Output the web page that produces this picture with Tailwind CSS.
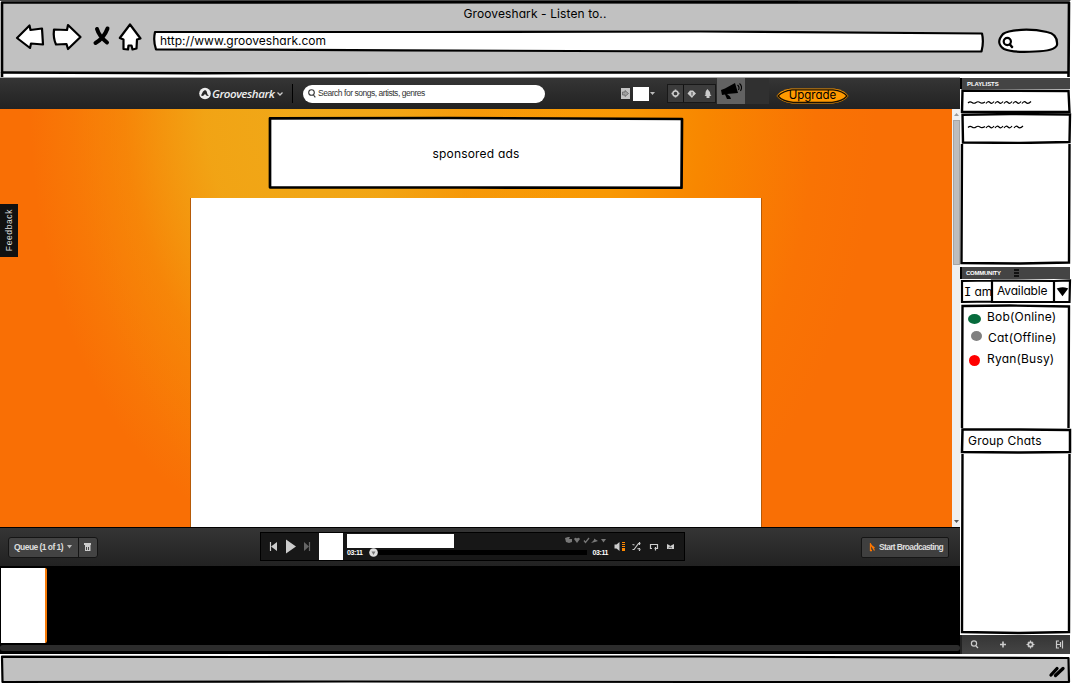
<!DOCTYPE html>
<html lang="en">
<head>
<meta charset="utf-8">
<title>Grooveshark - Listen to..</title>
<script src="https://cdn.jsdelivr.net/npm/@tailwindcss/browser@4"></script>
</head>
<body class="w-[1072px] h-[684px] overflow-hidden bg-white font-['Inter',sans-serif] text-black">
<div class="flex h-[684px] w-[1072px] flex-col [font-feature-settings:'cv11']">

  <!-- Browser chrome -->
  <header class="relative h-[77px] shrink-0">
    <svg class="absolute inset-0" width="1072" height="77" fill="none" stroke="#000" stroke-linejoin="round" stroke-linecap="round">
      <path d="M2 2.5L1069 2L1068.500 73L2 72.500Z" fill="#c1c1c1" stroke="none"/>
      <path d="M0 .5H1070" stroke="#444" stroke-width="1"/>
      <path d="M2 77L2 2.500L500 2.200L1069 2.500L1068.500 77" stroke-width="2.600"/>
      <path d="M2 72.500L200 73.200L560 72.500L1068 72.500" stroke-width="2.400"/>
      <path d="M155 32L420 32L700 31.500L982 33.500Q984 42 981.500 51.500L700 51.500L400 50.300L156 49.300Q153 41 155 32Z" fill="#fff" stroke-width="2.200"/>
      <path d="M17 38L29.500 25.500L30.500 30L42 28.500L43 44.500L31 43.500L30 48Z" fill="#fff" stroke-width="2.200"/>
      <path d="M54 29.500L67 30L68 25L80.500 37L68 49L66.500 44L56 44.500Q53 38 54 29.500Z" fill="#fff" stroke-width="2.200"/>
      <path d="M97 29Q99 36 107 42.500M107.500 28.500Q104 38 95.500 43" stroke-width="4"/>
      <path d="M130 24.500L119.800 38L123.500 39.500L123.500 49L128 49.500L128.500 45.500L131.500 45.500L132.500 49.500L136.500 48.500L137 39.500L140.500 38.500Z" fill="#fff" stroke-width="2.200"/>
      <path d="M1009 31.500Q1027 27.500 1047 32Q1058 34 1057 45Q1055 51 1035 51.500Q1014 53 1004 49Q995 43 1003 34Q1005 32.500 1009 31.500Z" fill="#fff" stroke-width="2.200"/>
      <circle cx="1007.300" cy="41.500" r="3.600" stroke-width="2.200"/><path d="M1010 44.500L1012 47" stroke-width="2.400"/>
    </svg>
    <div class="relative flex flex-col">
      <div class="pt-[5px] pr-[2px] text-center text-[12px] leading-[17px] tracking-[.1px]">Grooveshark - Listen to..</div>
      <div class="pl-[160px] pt-[10px] text-[12px] leading-[17px] tracking-[.02px]">http://www.grooveshark.com</div>
    </div>
  </header>

  <div class="flex h-[577px] shrink-0">
    <main class="flex w-[960px] flex-col border-t border-[#aaa]">

      <!-- Top navigation -->
      <nav class="flex h-[31px] shrink-0 items-center bg-linear-to-b from-[#353535] to-[#222] text-[#eee]">
        <svg class="ml-[199px] mr-px" width="12" height="13" viewBox="0 0 12 13"><circle cx="6" cy="6.500" r="5.800" fill="#eee"/><path d="M2 8.500L4 4.500L6 3L7.500 4L8.500 7.500L10 8.500L8 9L6 7L4 9Z" fill="#292929"/></svg>
        <span class="w-[64px] whitespace-nowrap font-['Open_Sans',sans-serif] text-[11.500px] font-semibold italic leading-[16px] tracking-[-.4px]">Grooveshark</span>
        <svg width="8" height="8" viewBox="0 0 8 8" fill="none" stroke="#ccc" stroke-width="1.300"><path d="M1.500 2.500L4 5L6.500 2.500"/></svg>
        <div class="ml-[8px] mr-[10px] h-[19px] w-px bg-black"></div>
        <div class="flex h-[18px] w-[242px] items-center rounded-full bg-white pl-[5px] text-[#333]">
          <svg width="8" height="9" viewBox="0 0 8 9" fill="none" stroke="#333" stroke-width="1.100"><circle cx="3.500" cy="3.500" r="2.800"/><path d="M5.500 6L7.300 8.300"/></svg>
          <span class="ml-[2px] whitespace-nowrap font-['Liberation_Sans',sans-serif] text-[8.500px] tracking-[-.47px]">Search for songs, artists, genres</span>
        </div>
        <svg class="ml-[76px]" width="10" height="11"><path d="M0 0H9V11H0Z" fill="#c4c4c4"/><path d="M1.500 4H4V2.500L7.500 5.500L4 8.500V7H1.500Z" fill="#a0a0a0" stroke="#666" stroke-width=".8"/></svg>
        <div class="ml-[2px] h-[14px] w-[16px] bg-white"></div>
        <svg class="ml-[1px]" width="5" height="4"><path d="M0 0H5L2.500 3Z" fill="#bbb"/></svg>
        <div class="ml-[12px] flex h-[19px] w-[49px] border border-[#181818] bg-[#3c3c3c]">
          <svg width="47" height="17" viewBox="0 0 47 17"><path d="M15.500 0V17" stroke="#111"/><circle cx="7.500" cy="8.500" r="2.600" fill="none" stroke="#ccc" stroke-width="1.500"/><path d="M7.500 4.500V6M7.500 11V12.500M3.500 8.500H5M10 8.500H11.500" stroke="#ccc" stroke-width="1.600"/><path d="M19.500 8.500L22 5.500H25L28 8.500L25 11.500L24 13L22 11Z" fill="#ccc"/><path d="M24 7V10.500" stroke="#444"/><path d="M39.500 4Q42 6 42.500 10L43.500 11H36.500L37.500 10Q37 6 39.500 4ZM38.500 11H41.500V13H38.500Z" fill="#ccc"/></svg>
        </div>
        <div class="ml-px mt-[-6px] flex h-[26px] w-[52px] bg-[#303030]">
          <svg width="28" height="26" viewBox="0 0 28 26"><path d="M0 0H28V26H0Z" fill="#626262"/><path d="M4 12L8 10.500L18 5L21 15L10 16L13 18.500L14 21H10L8 16.500L5 17Z" fill="#000"/><path d="M20.500 7Q23 9 21.500 12M22.500 5.500Q26 8.500 23.500 13" fill="none" stroke="#000" stroke-width="1.100"/></svg>
        </div>
        <div class="relative ml-[7px] mt-[5px] h-[16px] w-[73px] text-center text-[11.500px] leading-[15px] tracking-[0px] text-black">
          <svg class="absolute inset-0" width="73" height="16"><path d="M15 .5H58Q69 2 72.500 8Q68 14 57 15.500H16Q5 14 .5 8Q4 2 15 .5Z" fill="#ff9900"/><path d="M16 1.800H57Q67 3 71 8Q67 13 56 14.300H17Q6 13 2 8Q7 3 16 1.800Z" fill="none" stroke="#1a1000" stroke-width="1.300"/></svg>
          <span class="relative">Upgrade</span>
        </div>
      </nav>

      <!-- Page content -->
      <section class="flex h-[418px] shrink-0 bg-[#f96f05] bg-[radial-gradient(ellipse_270px_430px_at_300px_0px,#f0a818_0%,#f1a616ee_35%,#f4960c88_65%,#f96f0500_100%),radial-gradient(ellipse_400px_520px_at_476px_0px,#f99c06_0%,#f89804_37%,#f88700_57%,#f97304_85%,#f96f05_100%)]">
        <div class="h-[53px] w-[18px] mt-[95px] flex shrink-0 items-center justify-center bg-[#111] text-[#ddd]">
          <span class="rotate-180 font-['Liberation_Sans',sans-serif] text-[8.500px] leading-none tracking-[.6px] [writing-mode:vertical-rl]">Feedback</span>
        </div>
        <div class="ml-[172px] flex w-[572px] flex-col items-center">
          <div class="relative mt-[7px] flex h-[73px] w-[416px] shrink-0 items-center justify-center pt-[2px] text-[12px] tracking-[.18px]">
            <svg class="absolute inset-0" width="416" height="73"><path d="M2 2.300L180 2L414 3L413.500 71.800L200 71.500L2 71.300Z" fill="#fff" stroke="#000" stroke-width="2.700" stroke-linejoin="round"/></svg>
            <span class="relative">sponsored ads</span>
          </div>
          <div class="mt-[9px] w-full flex-1 border-x border-[#b55a08] bg-white"></div>
        </div>
        <div class="ml-auto flex w-[8px] flex-col items-center justify-between bg-[#efefef]">
          <div class="flex h-[156px] w-full flex-col items-center"><svg width="8" height="11"><path d="M2 7H7L4.500 4Z" fill="#999"/></svg><div class="ml-px w-[7px] flex-1 border border-[#a5a5a5] bg-[#bdbdbd]"></div></div>
          <svg width="8" height="10"><path d="M2 3H7L4.500 6Z" fill="#555"/></svg>
        </div>
      </section>

      <!-- Player -->
      <section class="flex h-[39px] shrink-0 items-center border-t border-black bg-linear-to-b from-[#353535] to-[#222] font-['Liberation_Sans',sans-serif] text-[#ddd]">
        <div class="ml-[8px] flex h-[21px] w-[90px] rounded-[3px] border border-[#151515] bg-[#434343]">
          <div class="flex w-[70px] items-center border-r border-[#151515] pl-[5px]"><span class="w-[50px] whitespace-nowrap text-[8.500px] font-bold tracking-[-.55px]">Queue (1 of 1)</span><svg class="ml-[3px]" width="5" height="4"><path d="M0 0H5L2.500 3.500Z" fill="#bbb"/></svg></div>
          <svg class="ml-[5px] mt-[5px]" width="8" height="9"><path d="M0 0H7V2H0ZM1 2H6.500V8H1Z" fill="#ccc"/><path d="M2.500 4V7M4.500 4V7" stroke="#444"/></svg>
        </div>
        <div class="-mt-px ml-[162px] flex h-[29px] w-[425px] border border-black bg-[#171717]">
          <svg width="58" height="27" viewBox="0 0 58 27"><path d="M9.500 9V18" stroke="#ccc" stroke-width="1.200"/><path d="M16 9V18L10 13.500ZM25 6.500V20.500L35 13.500Z" fill="#ccc"/><path d="M43 9V18L48 13.500Z" fill="#666"/><path d="M48.500 9V18" stroke="#666" stroke-width="1.200"/></svg>
          <div class="h-[27px] w-[24px] bg-white"></div>
          <div class="ml-[4px] flex w-[261px] flex-col">
            <div class="flex h-[15px] justify-between">
              <div class="mt-px h-[14px] w-[107px] bg-white"></div>
              <svg width="44" height="12" viewBox="0 0 44 12"><g fill="#777"><path d="M1 5L4 4H6L5 6L8 6V9L5 10L2 9Z"/><path d="M10 6Q11.500 4 13 5.500Q14.500 4 16 6L13 10Z"/><path d="M27 10L30 7V5.500L34 8L31 9Z"/><path d="M37 6H42L39.500 9.500Z"/></g><path d="M20 7.500L21.500 9.500L25 5" fill="none" stroke="#777" stroke-width="1.300"/></svg>
            </div>
            <div class="flex items-center text-[7px] font-bold leading-[9px] text-white">
              <span class="w-[16px] tracking-[-.4px]">03:11</span>
              <svg class="ml-[6px]" width="9" height="9"><circle cx="4.500" cy="4.500" r="4.300" fill="#ddd"/><path d="M2.500 3.500H6.500L4.500 7Z" fill="#777"/></svg>
              <div class="h-[5px] w-[209px] bg-black"></div>
              <span class="ml-auto tracking-[-.4px]">03:11</span>
            </div>
          </div>
          <svg class="ml-[6px]" width="66" height="27" viewBox="0 0 66 27"><path d="M.5 11.500H2.500L5.500 9V18L2.500 15.500H.5Z" fill="#ccc"/><path d="M8 9H11V10H8ZM8 11H11V12H8ZM8 13H11V14H8ZM8 15H11V18H8Z" fill="#f80"/><path d="M18.500 16.500H20L24.500 10.500H26.500M18.500 11.500L20.500 12M23.500 15.500L26.500 16.500M25.500 9V12M25.500 15V18" fill="none" stroke="#ccc" stroke-width="1.200"/><path d="M38 15.500H36.500V11.500H43.500V15.500H40.500M41.500 14V17.500" fill="none" stroke="#ccc" stroke-width="1.200"/><path d="M53 11L55 12L56.500 13L58 12L60 11V16H53Z" fill="#ccc"/><path d="M54.500 15L56 14L58 15" stroke="#555" fill="none"/></svg>
        </div>
        <div class="ml-auto mr-[11px] flex h-[21px] w-[88px] items-center rounded-[2px] border border-[#151515] bg-[#3f3f3f] pl-[7px]">
          <svg width="7" height="9"><path d="M1.500 8V1L5.500 7.500M1 7.500H3M3 3L5.500 5" fill="none" stroke="#f70" stroke-width="1.300"/></svg>
          <span class="ml-[3px] whitespace-nowrap text-[8.500px] font-bold tracking-[-.67px]">Start Broadcasting</span>
        </div>
      </section>
      <section class="flex flex-1 flex-col bg-black">
        <div class="ml-px mt-[2px] h-[75px] w-[46px] rounded-r-[2px] border-r-2 border-[#f87b08] bg-white"></div>
        <div class="mt-[2px] h-[6px] rounded bg-[#2c2c2c]"></div>
      </section>
    </main>

    <!-- Sidebar -->
    <aside class="flex w-[112px] flex-col text-[12px]">
      <div class="mr-[2px] mt-px flex h-[11px] shrink-0 items-center border-l-2 border-black bg-[#444] pl-[5px] pt-px font-['Liberation_Sans',sans-serif] text-[6px] font-bold leading-none tracking-[-.1px] text-white">PLAYLISTS</div>
      <div class="relative h-[24px] shrink-0">
        <svg class="absolute inset-0" width="112" height="24" fill="#fff" stroke="#000"><path d="M2.500 1.500L108.500 2L109.500 23H2Z" stroke-width="2.400"/><path d="M8 14q2-2 4-.5t4 0t4 0t5-.5M26 14.500q2-3 4-1t4-1M35 14.500q2-3 4-1t4-1M44 14.500q2-3 4-1t4-1M53 14.500q2-3 4-1t4-1M62 14.500q2-3 4-1t5-1" fill="none" stroke-width="1.200"/></svg>
      </div>
      <div class="relative h-[31px] shrink-0">
        <svg class="absolute inset-0" width="112" height="31" fill="#fff" stroke="#000"><path d="M2.500 1.800L50 1L110 1.500L109.500 29L60 30L3 29.500Z" stroke-width="2.400"/><path d="M8 14.500q2-2 4-.5t4 0t4 0t5-.5M26 15q2-3 4-1t4-1M35 15q2-3 4-1t4-1M44 15q2-3 4-1t4-1M54 15q2-3 4-1t5-1" fill="none" stroke-width="1.200"/></svg>
      </div>
      <svg class="shrink-0" width="112" height="122"><path d="M2 0L1.500 119L60 119.500L109 118.500L109.500 0" fill="#fff" stroke="#000" stroke-width="2.400"/></svg>
      <div class="mr-[2px] mt-px flex h-[12px] shrink-0 items-center border-l-2 border-black bg-[#444] pl-[4px] font-['Liberation_Sans',sans-serif] text-[6px] font-bold leading-none tracking-[-.25px] text-white"><span class="w-[48px]">COMMUNITY</span><svg width="6" height="8"><path d="M0 1H5M0 4H5M0 7H5" stroke="#000" stroke-width="1.400"/></svg></div>
      <div class="relative flex h-[25px] shrink-0 leading-[22px]">
        <svg class="absolute inset-0" width="112" height="25" fill="#fff" stroke="#000" stroke-width="2.200"><path d="M2 2L32 1.500V22.500L2 23ZM32 1.500L94 2V23H32ZM94 2L110 1.500L109.500 23L94 23Z"/><path d="M98.500 10Q103 8.500 106.500 10L102.500 15.500Z" fill="#000"/></svg>
        <span class="relative w-[32px] whitespace-pre pl-[4px] pt-[2px] tracking-[-.1px]"><span class="font-['DejaVu_Sans_Mono',monospace]">I</span> am</span>
        <span class="relative pl-[5px] pt-px text-[12px] tracking-[-.15px]">Available</span>
      </div>
      <div class="relative flex h-[124px] shrink-0 flex-col pt-[2px] text-[12px] leading-[21px] tracking-[.2px]">
        <svg class="absolute inset-0" width="112" height="124"><path d="M2 124L2.500 2L50 1.500L109 2.500L108.500 124" fill="#fff" stroke="#000" stroke-width="2.400"/></svg>
        <div class="relative flex items-center"><i class="ml-[8px] mr-[6px] mt-[5px] h-[10px] w-[13px] rounded-[50%] bg-[#066b3c]"></i>Bob(Online)</div>
        <div class="relative flex items-center"><i class="mb-[3px] ml-[11px] mr-[6px] h-[10px] w-[11px] rounded-[50%] bg-[#808080]"></i>Cat(Offline)</div>
        <div class="relative flex items-center"><i class="ml-[9px] mr-[7px] mt-[3px] h-[11px] w-[11px] rounded-[50%] bg-[#f00]"></i>Ryan(Busy)</div>
      </div>
      <div class="relative h-[26px] shrink-0 pl-[8px] leading-[26px] tracking-[.2px]">
        <svg class="absolute inset-0" width="112" height="26"><path d="M2.500 1.500L60 1.500L110 2L110 24L60 24.500L2 24Z" fill="#fff" stroke="#000" stroke-width="2.500"/></svg>
        <span class="relative">Group Chats</span>
      </div>
      <svg class="shrink-0" width="112" height="181"><path d="M2.500 0L2 178L60 179L109 178L109.500 0" fill="#fff" stroke="#000" stroke-width="2.400"/></svg>
      <div class="mr-[2px] flex min-h-0 flex-1 border-l-2 border-[#222] bg-linear-to-b from-[#353535] to-[#454545]">
        <svg width="108" height="18" viewBox="0 0 108 18" fill="none" stroke="#ccc" stroke-width="1.200"><circle cx="12" cy="8.500" r="2.600"/><path d="M14 11L16 13"/><path d="M38 9.500H44M41 6.500V12.500" stroke-width="1.600"/><circle cx="68.500" cy="9.500" r="2.200" stroke-width="1.700"/><path d="M68.500 5.500V7M68.500 12V13.500M64.500 9.500H66M71 9.500H72.500M66 7L66.500 7.500M70.500 11.500L71 12M71 7L70.500 7.500M66.500 11.500L66 12"/><path d="M94.500 5.500V13.500M94 6H97M94 13H97M94 9.500H99M98.500 7V12M100.500 5.500V13.500"/></svg>
      </div>
    </aside>
  </div>

  <!-- Status bar -->
  <footer class="h-[30px] shrink-0">
    <svg width="1072" height="30" fill="none" stroke="#000" stroke-linecap="round"><path d="M2 2.700L240 3L700 2.500L1068.500 4L1069 28L700 28L350 27.500L2.500 28Z" fill="#c1c1c1" stroke-width="2.200" stroke-linejoin="round"/><path d="M1051 21L1057 14.500M1055.500 21.500L1063 14.500" stroke-width="3.300"/></svg>
  </footer>
</div>
</body>
</html>
